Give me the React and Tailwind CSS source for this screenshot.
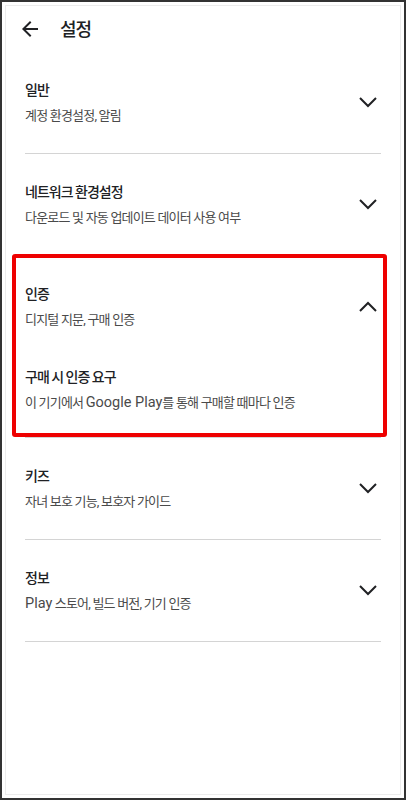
const FONT = { fontFamily: 'Roboto, "Noto Sans CJK KR", "Noto Sans", sans-serif' };

function Chevron({ up }) {
  return (
    <svg width="18" height="11" viewBox="0 0 18 11" className="shrink-0 mr-[4px]">
      <polyline
        points={up ? "1,10 9,2 17,10" : "1,1 9,9 17,1"}
        fill="none"
        stroke="#202124"
        strokeWidth="2"
      />
    </svg>
  );
}

function Latin({ children }) {
  return <span className="text-[14.5px] tracking-normal">{children}</span>;
}

function Item({ title, sub }) {
  return (
    <div className="min-w-0 flex-1">
      <div className="text-[14px] leading-[20px] font-medium tracking-[-1px] text-[#202124]">{title}</div>
      <div className="mt-[7px] text-[13px] leading-[18px] tracking-[-0.8px] text-[#4a4a4a]">{sub}</div>
    </div>
  );
}

function Section({ title, sub, open, children }) {
  return (
    <div className="mx-[19px] border-b border-[#d4d4d4]">
      <div className="flex items-center pt-[28px] pb-[28px]">
        <Item title={title} sub={sub} />
        <Chevron up={open} />
      </div>
      {children}
    </div>
  );
}

export default function App() {
  return (
    <div className="h-[800px] w-[406px] border-2 border-[#333] bg-white p-[3px]" style={FONT}>
      <div className="relative h-full border border-[#ececec]">
        <div className="flex h-[46px] items-center pl-[12px]">
          <svg width="24" height="24" viewBox="0 0 24 24" fill="#202124">
            <path d="M20 11H7.83l5.59-5.59L12 4l-8 8 8 8 1.41-1.41L7.83 13H20v-2z" />
          </svg>
          <div className="ml-[18px] text-[18px] font-medium tracking-[-1px] text-[#202124]">설정</div>
        </div>

        <Section title="일반" sub="계정 환경설정, 알림" />
        <Section title="네트워크 환경설정" sub="다운로드 및 자동 업데이트 데이터 사용 여부" />
        <Section title="인증" sub="디지털 지문, 구매 인증" open>
          <div className="pt-[10px] pb-[25px]">
            <Item
              title="구매 시 인증 요구"
              sub={<>이 기기에서 <Latin>Google Play</Latin>를 통해 구매할 때마다 인증</>}
            />
          </div>
        </Section>
        <Section title="키즈" sub="자녀 보호 기능, 보호자 가이드" />
        <Section title="정보" sub={<><Latin>Play</Latin> 스토어, 빌드 버전, 기기 인증</>} />

        <div className="absolute left-[6px] top-[248px] h-[183px] w-[375px] rounded-[3px] border-4 border-[#ee0000]" />
      </div>
    </div>
  );
}
